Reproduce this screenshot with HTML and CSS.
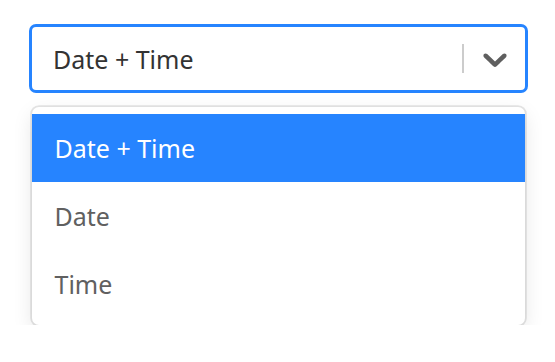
FILE: index.html
```html
<!DOCTYPE html>
<html>
<head>
<meta charset="utf-8">
<link rel="stylesheet" href="styles.css">
</head>
<body>
<div class="wrap">
  <div class="control">
    <div class="value">Date + Time</div>
    <div class="indicators">
      <span class="sep"></span>
      <span class="indicator">
        <svg viewBox="0 0 20 20" width="40" height="40" aria-hidden="true"><path fill="currentColor" d="M4.516 7.548c0.436-0.446 1.043-0.481 1.576 0l3.908 3.747 3.908-3.747c0.533-0.481 1.141-0.446 1.574 0 0.436 0.445 0.408 1.197 0 1.615-0.406 0.418-4.695 4.502-4.695 4.502-0.217 0.223-0.502 0.335-0.787 0.335s-0.57-0.112-0.789-0.335c0 0-4.287-4.084-4.695-4.502s-0.436-1.17 0-1.615z"/></svg>
      </span>
    </div>
  </div>
  <div class="menu">
    <div class="option focused">Date + Time</div>
    <div class="option">Date</div>
    <div class="option">Time</div>
  </div>
</div>
</body>
</html>
```
FILE: styles.css
```css
html, body {
  margin: 0;
  padding: 0;
  background: #ffffff;
}
body {
  font-family: "Noto Sans", "Open Sans", sans-serif;
}
.wrap {
  padding: 24px 0 0 29px;
  width: 499px;
}
.control {
  box-sizing: border-box;
  width: 499px;
  height: 69px;
  border: 3.6px solid #2684ff;
  border-radius: 7px;
  display: flex;
  align-items: center;
  background: #fff;
}
.value {
  flex: 1;
  padding-left: 21px;
  font-size: 25px;
  color: #333333;
}
.indicators {
  display: flex;
  align-items: center;
  align-self: stretch;
}
.sep {
  width: 1.8px;
  height: 29px;
  background: #cccccc;
}
.indicator {
  width: 61px;
  display: flex;
  align-items: center;
  justify-content: center;
  color: #5f5f5f;
}
.indicator svg {
  display: block;
}
.menu {
  margin: 14px 0 0 2.5px;
  width: 493px;
  padding: 7px 0;
  background: #fff;
  border-radius: 7px;
  box-shadow: 0 0 0 1.8px rgba(0, 0, 0, 0.1), 0 7px 20px rgba(0, 0, 0, 0.1);
}
.option {
  height: 68px;
  display: flex;
  align-items: center;
  padding-left: 23px;
  font-size: 25px;
  color: #606060;
}
.option.focused {
  background: #2684ff;
  color: #ffffff;
}
```
